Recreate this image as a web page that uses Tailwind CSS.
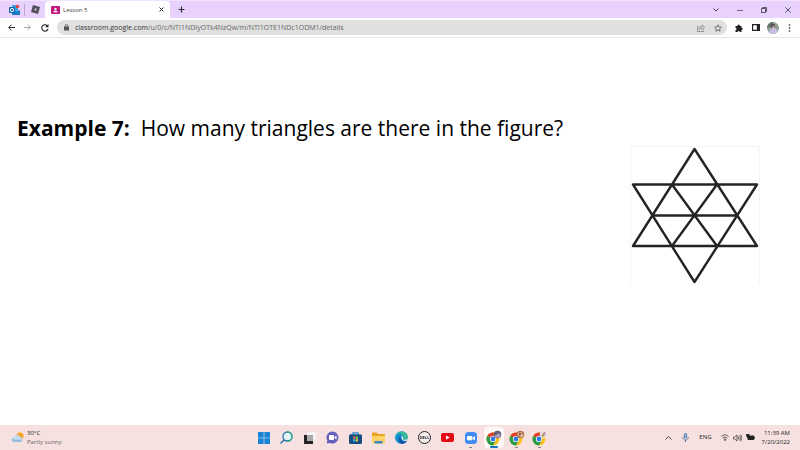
<!DOCTYPE html>
<html lang="en">
<head>
<meta charset="utf-8">
<meta name="viewport" content="width=device-width, initial-scale=1">
<title>Lesson 5</title>
<script src="https://cdn.jsdelivr.net/npm/@tailwindcss/browser@4"></script>
</head>
<body class="flex min-h-screen flex-col bg-white font-['Open_Sans','Noto_Sans',sans-serif] text-[#222]">
<svg class="hidden">
  <defs>
    <symbol id="chrome" viewBox="0 0 16 16">
      <circle cx="7" cy="9" r="6.5" fill="#fbc116"/>
      <path d="M7 9 1.4 5.7A6.5 6.5 0 0 1 12.6 5.7H7Z" fill="#e33b2e"/>
      <path d="M7 9 1.4 5.7A6.5 6.5 0 0 0 7 15.5L9.8 10.6Z" fill="#2a9d4a"/>
      <circle cx="7" cy="9" r="3.1" fill="#fff"/><circle cx="7" cy="9" r="2.4" fill="#3478e5"/>
    </symbol>
  </defs>
</svg>

<header>
  <div class="flex h-[18px] items-stretch border-t border-[#f1e4ff] bg-[#e8d2fd]">
    <div class="flex items-center pl-2">
      <button aria-label="Outlook" class="block"><svg class="size-3" viewBox="0 0 12 12"><path d="M4 1h6v8H4z" fill="#38a5e4"/><path d="M4 6l4 2 4-2v5H4z" fill="#1b78c8"/><rect x="1" y="3" width="6" height="6" rx="1" fill="#1166b5"/><circle cx="4" cy="6" r="1.6" fill="none" stroke="#fff"/><circle cx="9.500" cy="2.500" r="1.800" fill="#e0434a"/></svg></button>
      <span class="mx-1 h-3 w-px bg-[#b9a8cb]"></span>
      <button aria-label="Roblox" class="ml-px block"><svg class="size-[11px]" viewBox="0 0 11 11"><path d="M3 1 10 3 8 10 1 8Z" fill="#54505a"/><path d="M5 4.300 6.800 4.800 6.200 6.700 4.400 6.200Z" fill="#d9c8e8"/></svg></button>
    </div>
    <div class="ml-1 flex w-[125px] items-center rounded-t-[4px] bg-white pr-[6px] pl-[6px]">
      <svg class="h-2 w-[9px]" viewBox="0 0 9 8"><rect width="9" height="8" rx="1" fill="#c2187c"/><circle cx="4.500" cy="3" r="1.200" fill="#fff"/><path d="M2 6.300c.5-2 4.500-2 5 0z" fill="#fff"/></svg>
      <span class="ml-[3px] flex-1 text-[6px] leading-none text-[#444]">Lesson 5</span>
      <button aria-label="Close tab"><svg class="size-[5px]" viewBox="0 0 5 5" stroke="#222"><path d="M.5.5l4 4M4.500.5l-4 4"/></svg></button>
    </div>
    <button aria-label="New tab" class="ml-2"><svg class="size-[7px]" viewBox="0 0 7 7" stroke="#332c3b" stroke-width="1.200"><path d="M3.500.5v6M.5 3.500h6"/></svg></button>
    <div class="ml-auto flex items-center gap-[18px] pr-[9px]">
      <button aria-label="Search tabs"><svg class="size-[6px]" viewBox="0 0 6 6" fill="none" stroke="#56495f"><path d="M.5 1.500 3 4l2.500-2.500"/></svg></button>
      <button aria-label="Minimize"><svg class="size-[6px]" viewBox="0 0 6 6" stroke="#56495f" stroke-width=".8"><path d="M0 3.500h6"/></svg></button>
      <button aria-label="Restore"><svg class="size-[6px]" viewBox="0 0 6 6" fill="none" stroke="#3e3547" stroke-width=".8"><path d="M.5 1.500h4v4h-4zM1.500 1.500v-1h4v4h-1"/></svg></button>
      <button aria-label="Close"><svg class="size-[6px]" viewBox="0 0 6 6" stroke="#3e3547" stroke-width=".8"><path d="M.3.3l5.400 5.400M5.700.3.3 5.700"/></svg></button>
    </div>
  </div>
  <div class="flex h-5 items-center border-b border-[#e6e6e6] pr-[9px] pl-2">
    <div class="flex items-center gap-[9px]">
      <button aria-label="Back"><svg class="size-[7px]" viewBox="0 0 8 8" fill="none" stroke="#222" stroke-width="1.100"><path d="M8 4H1M4 .8.8 4 4 7.200"/></svg></button>
      <button aria-label="Forward"><svg class="size-[7px]" viewBox="0 0 8 8" fill="none" stroke="#999"><path d="M0 4h7M4 .8 7.200 4 4 7.200"/></svg></button>
      <button aria-label="Reload" class="ml-px"><svg class="size-2" viewBox="0 0 8 8" fill="none" stroke="#222" stroke-width="1.100"><path d="M6.700 2.200A3.200 3.200 0 1 0 7 5"/><path d="M7.500 0v3.300H4.200Z" fill="#222" stroke="none"/></svg></button>
    </div>
    <div class="ml-2 flex h-[15px] min-w-0 flex-1 items-center rounded-full bg-[#e0e0e0] pr-[5px] pl-[7px]">
      <svg class="h-[7px] w-[5px]" viewBox="0 0 5 7"><rect y="2.500" width="5" height="4" rx=".5" fill="#555"/><path d="M1.200 3V1.800a1.300 1.300 0 0 1 2.600 0V3" fill="none" stroke="#555" stroke-width=".8"/></svg>
      <div class="ml-[6px] min-w-0 flex-1 truncate text-[7px] leading-[10px] text-[#666]"><a href="#"><span class="text-[#333]">classroom.google.com</span>/u/0/c/NTI1NDIyOTk4NzQw/m/NTI1OTE1NDc1ODM1/details</a></div>
      <button aria-label="Share"><svg class="size-2" viewBox="0 0 8 8" fill="none" stroke="#777" stroke-width=".7"><path d="M2 2.500H.5v5h6V6M2 5.500c.3-2 1.500-3 3.200-3V1l2.400 2.300L5.200 5.500V4.200C4 4.200 3 4.500 2 5.500Z"/></svg></button>
      <button aria-label="Bookmark" class="ml-[9px]"><svg class="size-2" viewBox="0 0 8 8" fill="none" stroke="#555" stroke-width=".8"><path d="M4 .8 5 3l2.400.2-1.800 1.600.5 2.400L4 6 1.900 7.200l.5-2.400L.6 3.200 3 3Z"/></svg></button>
    </div>
    <button aria-label="Extensions" class="ml-2"><svg class="size-2" viewBox="0 0 8 8" fill="#222"><path d="M.5 2H2.600a1.200 1.200 0 1 1 2.300 0H6.500V3.800a1.100 1.100 0 1 1 0 2.200V8H4.700a1 1 0 0 0-2 0H.5V6a1 1 0 0 0 0-2Z"/></svg></button>
    <button aria-label="Side panel" class="ml-[9px]"><svg class="h-[7px] w-2" viewBox="0 0 8 7"><path d="M.6.6h6.800v5.800H.6z" fill="#fff" stroke="#222" stroke-width="1.200"/><path d="M4.800 0H8v7H4.800z" fill="#222"/></svg></button>
    <button aria-label="Profile" class="ml-[7px]"><svg class="size-3 rounded-full" viewBox="0 0 12 12"><path d="M0 0h12v12H0z" fill="#8fa594"/><path d="M0 0h7l-3 5-4 1z" fill="#5f756e"/><circle cx="6" cy="4" r="2.200" fill="#57464e"/><path d="M2 12c0-8 8-8 9-1l-2 1z" fill="#cbbce2"/><circle cx="6.500" cy="4.800" r="1.200" fill="#c9a59b"/></svg></button>
    <button aria-label="Menu" class="ml-[9px]"><svg class="h-2 w-[3px]" viewBox="0 0 3 8" fill="#222"><circle cx="1.500" cy="1" r=".8"/><circle cx="1.500" cy="4" r=".8"/><circle cx="1.500" cy="7" r=".8"/></svg></button>
  </div>
</header>

<main class="flex flex-1 flex-col pt-[72px] pr-10 pl-[17px]">
  <h1 class="text-[21px] leading-9 whitespace-pre text-black"><strong class="font-bold">Example 7:</strong>  How many triangles are there in the figure?</h1>
  <svg class="h-[138px] w-[130px] self-end" viewBox="630 146 130 138" role="img" aria-label="Star figure divided into triangles">
    <path d="M630.500 284V146.500H759.500V284" fill="none" stroke="#f4f4f4"/>
    <path d="M694.500 149 633 246H757ZM633 184.500H757L694.500 282ZM653 215.500H737M672 184.500 717 246M717 184.500 672 246" fill="none" stroke="#262324" stroke-width="2.400" stroke-linejoin="round"/>
  </svg>
</main>

<footer class="grid h-[25px] grid-cols-[1fr_auto_1fr] items-center bg-[#f6e1e0] text-[6px] leading-[9px]">
  <button class="flex items-center gap-[3px] pl-[11px] text-left">
    <svg class="h-[11px] w-[13px]" viewBox="0 0 13 11"><circle cx="9" cy="4" r="3.500" fill="#f5a21d"/><path d="M3 10a2.500 2.500 0 0 1 0-5 3.200 3.200 0 0 1 6-.3A2.700 2.700 0 0 1 9.500 10Z" fill="#c4daf0"/><path d="M3 10a2.500 2.500 0 0 1-2-3.500c2 1.500 6 1.500 10 1A2.600 2.600 0 0 1 9.500 10Z" fill="#97bbdf"/></svg>
    <span><span class="block">30°C</span><span class="block text-[#666]">Partly sunny</span></span>
  </button>
  <nav aria-label="Taskbar" class="flex h-full items-center pl-[3px]">
    <button aria-label="Start" class="grid w-[23px] place-items-center"><svg class="size-3" viewBox="0 0 12 12" fill="#1685d6"><path d="M0 0h5.700v5.700H0zM6.300 0H12v5.700H6.300zM0 6.300h5.700V12H0zM6.300 6.300H12V12H6.300z"/></svg></button>
    <button aria-label="Search" class="grid w-[23px] place-items-center"><svg class="size-[13px]" viewBox="0 0 13 13" fill="none" stroke-linecap="round"><circle cx="7.500" cy="5.500" r="4.500" fill="#e8f3f5" stroke="#2473ae" stroke-width="1.300"/><path d="M7.500 1a4.500 4.500 0 0 1 0 9" stroke="#32a982" stroke-width="1.300"/><path d="M4 9 1 12" stroke="#2371a8" stroke-width="1.500"/></svg></button>
    <button aria-label="Task view" class="grid w-[23px] place-items-center"><svg class="size-3" viewBox="0 0 12 12"><path d="M0 3h9v9H0z" fill="#252525"/><path d="M3 0h9v9H3z" fill="#f4f4f4"/><path d="M3 3h6v6H3z" fill="#aaa"/></svg></button>
    <button aria-label="Chat" class="grid w-[23px] place-items-center"><svg class="size-[13px]" viewBox="0 0 13 13"><path d="M6.500.5a6 6 0 1 1-2.700 11.400L.7 12.500 1.300 9.500A6 6 0 0 1 6.500.5Z" fill="#6460bd"/><rect x="3" y="4" width="5" height="5" rx="1" fill="#fff"/><path d="m8.500 6 2-1.500v4l-2-1.500z" fill="#fff"/></svg></button>
    <button aria-label="Store" class="grid w-[23px] place-items-center"><svg class="h-3 w-[13px]" viewBox="0 0 13 12"><path d="M4 3V.8h5V3" fill="none" stroke="#258bd0" stroke-width="1.200"/><rect y="2.300" width="13" height="9.700" rx="1.500" fill="#17507f"/><path d="M4 4.500h2.300v2.300H4z" fill="#e76042"/><path d="M6.700 4.500H9v2.300H6.700z" fill="#8dc34a"/><path d="M4 7.200h2.300v2.300H4z" fill="#35aee9"/><path d="M6.700 7.200H9v2.300H6.700z" fill="#f5c343"/></svg></button>
    <button aria-label="File Explorer" class="grid w-[23px] place-items-center"><svg class="h-3 w-[13px]" viewBox="0 0 13 12"><path d="M0 1.500Q0 .5 1 .5h3.500l1.500 1.500h6q1 0 1 1V10H0z" fill="#e6a61f"/><path d="M0 4h13v7.500H0z" fill="#fbd364"/><path d="M2.500 9h8v2.500h-8z" fill="#3989c9"/></svg></button>
    <button aria-label="Edge" class="grid w-[23px] place-items-center"><svg class="size-[13px]" viewBox="0 0 13 13"><circle cx="6.500" cy="6.500" r="6.200" fill="#177dc9"/><path d="M.3 6.500C.5-1.500 12.500-1.500 12.800 6c0 3-4 3.300-5 2 .9-1 .5-3.300-1.500-3.500C3.500 4 1 5 .3 6.500Z" fill="#35bd99"/><path d="M.3 6.500C1 2 6 1.500 8 4.500 5.500 3.500 3 5.500 3.500 8.500c.4 2 1.500 3.500 3 4.200C3 12.700.2 10 .3 6.500Z" fill="#1491d2"/><path d="M6 5.500c-1.500 2 0 5 3 5.200 1.500 0 2.300-.3 3-.8-1 2-3 3-5.500 2.800C3 11 3 7 6 5.500Z" fill="#124f9e"/><path d="M6.500 5c1.500.3 2 2 1.300 3 1 1.200 3.700 1 4.800 0l-.4 1.500c-2.500 1.400-6.500-.5-5.700-4.500Z" fill="#eef4f4"/></svg></button>
    <button aria-label="Dell" class="grid w-[23px] place-items-center"><span class="grid size-[13px] place-items-center rounded-full border border-[#222] bg-[#f8eeee] text-[4px] leading-none font-bold">DELL</span></button>
    <button aria-label="YouTube" class="grid w-[23px] place-items-center"><svg class="h-[9px] w-[13px]" viewBox="0 0 13 9"><rect width="13" height="9" rx="2" fill="#e50914"/><path d="m5 2.500 3.800 2L5 6.500z" fill="#fff"/></svg></button>
    <button aria-label="Zoom" class="relative grid h-full w-[23px] place-items-center"><svg class="size-3" viewBox="0 0 12 12"><rect width="12" height="12" rx="3.500" fill="#408cf2"/><rect x="2" y="4" width="5.500" height="4.300" rx="1" fill="#fff"/><path d="m8 5.500 2-1.300v4L8 7z" fill="#fff"/></svg><span class="absolute bottom-0.5 left-[10px] h-px w-[3px] bg-[#888]"></span></button>
    <button aria-label="Chrome, current profile" class="relative grid h-full w-[23px] place-items-center"><span class="grid h-[21px] w-5 place-items-center rounded-sm bg-[#fdf7f6]"><svg class="size-4" viewBox="0 0 16 16"><use href="#chrome"/><circle cx="11.500" cy="4.500" r="3.800" fill="#625f75"/><path d="M8 7c1-3 3-1 4-4l3 2-2 3z" fill="#aaa0bc"/></svg></span><span class="absolute bottom-0.5 left-2 h-0.5 w-2 rounded-full bg-[#1676bd]"></span></button>
    <button aria-label="Chrome, second profile" class="relative grid h-full w-[23px] place-items-center"><svg class="size-4" viewBox="0 0 16 16"><use href="#chrome"/><circle cx="11.500" cy="4.500" r="3.800" fill="#b07452"/><path d="m9 3 3-1 1 2 2 1-3 3-1-3-2 1z" fill="#e2bf9d"/><circle cx="11" cy="4" r="1" fill="#7c302c"/></svg><span class="absolute bottom-0.5 left-[10px] h-px w-[3px] bg-[#888]"></span></button>
    <button aria-label="Chrome, third profile" class="relative grid h-full w-[23px] place-items-center"><svg class="size-4" viewBox="0 0 16 16"><use href="#chrome"/><circle cx="11.500" cy="4.500" r="3.800" fill="#e7dddd"/><path d="m9 6 2-3 2 1-1 3z" fill="#b6a05e"/><circle cx="12.500" cy="3" r="1" fill="#b882ad"/></svg><span class="absolute bottom-0.5 left-[10px] h-px w-[3px] bg-[#888]"></span></button>
  </nav>
  <div class="flex items-center justify-end pr-[10px]">
    <button aria-label="Hidden icons"><svg class="h-1 w-[7px]" viewBox="0 0 7 4" fill="none" stroke="#333" stroke-width=".9"><path d="M.5 3.500 3.500.5l3 3"/></svg></button>
    <button aria-label="Microphone" class="ml-[10px]"><svg class="h-[9px] w-[7px]" viewBox="0 0 7 9" fill="none" stroke="#3c6ea8" stroke-width=".8"><rect x="2.300" y=".5" width="2.400" height="4.800" rx="1.200" fill="#9bbbe0"/><path d="M.7 4c0 4 5.600 4 5.600 0M3.500 7v2"/></svg></button>
    <button class="ml-[10px]">ENG</button>
    <button aria-label="Network, volume and battery" class="ml-[9px] flex items-center gap-[4px]">
      <svg class="h-[7px] w-2" viewBox="0 0 8 7" fill="none" stroke="#444" stroke-width=".8"><path d="M.4 2.500q3.600-3.400 7.200 0M1.700 4q2.300-2.200 4.600 0M2.900 5.300q1.100-1 2.200 0"/><circle cx="4" cy="6" r=".5" fill="#444"/></svg>
      <svg class="h-2 w-[9px]" viewBox="0 0 9 8" fill="none" stroke="#444" stroke-width=".8"><path d="M.4 3h1.300L4 1v6L1.700 5H.4ZM5.300 2.500q1 1.500 0 3M6.500 1.500q2 2.500 0 5M7.800.7q2.400 3.300 0 6.600"/></svg>
      <svg class="h-[7px] w-[9px]" viewBox="0 0 9 7"><rect x="1.500" y="1.500" width="6.800" height="4.500" rx="1" fill="#222"/><path d="M8.300 3H9v1.500h-.7z" fill="#222"/><path d="M0 0h3.500v3L2 4 .5 3z" fill="#222"/></svg>
    </button>
    <button class="ml-[7px] text-right"><time datetime="2022-07-20T11:39"><span class="block">11:39 AM</span><span class="block">7/20/2022</span></time></button>
  </div>
</footer>
</body>
</html>
